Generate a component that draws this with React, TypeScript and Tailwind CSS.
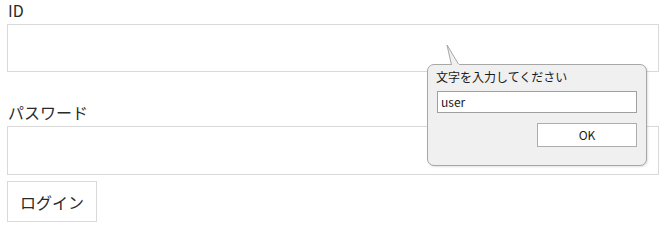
import React from 'react';

const jp = '"Noto Sans CJK JP", "Noto Sans", sans-serif';

// Speech-bubble prompt that hangs off the ID field
function PromptBubble() {
  return (
    <div className="absolute left-[427px] top-[64px] w-[220px] h-[102px]">
      {/* tail */}
      <svg
        className="absolute left-[18px] top-[-20px]"
        width="16"
        height="22"
        viewBox="0 0 16 22"
      >
        <path d="M6.5 21 L2 1 L14 21" fill="#f0f0f0" stroke="#a7a7a7" strokeWidth="1" />
      </svg>
      <div className="w-full h-full rounded-[7px] border border-[#a7a7a7] bg-[#f0f0f0] px-[9px] pt-[4px] shadow-[1px_1px_2px_rgba(0,0,0,0.12)]">
        <div className="relative z-10 -ml-px text-[12px] leading-[16px] text-[#1a1a1a]">文字を入力してください</div>
        <div className="mt-[6px] h-[22px] w-full border border-[#a0a0a0] bg-white pl-[3px] text-[12px] leading-[20px] text-[#1a1a1a]">
          user
        </div>
        <div className="mt-[10px] flex justify-end">
          <button className="h-[24px] w-[100px] border border-[#adadad] bg-white text-[12px] leading-[20px] text-[#1a1a1a]">
            OK
          </button>
        </div>
      </div>
      {/* hide bubble border beneath tail */}
      <div className="absolute left-[25px] top-0 w-[7px] h-[2px] bg-[#f0f0f0]" />
    </div>
  );
}

export default function App() {
  return (
    <div className="relative w-[672px] h-[231px] bg-white px-[7px] text-[#2a2a2a]" style={{ fontFamily: jp }}>
      <div className="h-[24px] pl-px text-[16px] leading-[20px]">ID</div>
      <div className="h-[48px] w-[652px] border border-[#d9d9d9] bg-white" />

      <div className="mt-[30px] h-[24px] pl-px text-[16px] leading-[20px]">パスワード</div>
      <div className="h-[49px] w-[652px] border border-[#d9d9d9] bg-white" />

      <button className="mt-[6px] h-[41px] w-[90px] border border-[#d9d9d9] bg-white text-[16px] leading-[20px] text-[#2a2a2a]">
        ログイン
      </button>

      <PromptBubble />
    </div>
  );
}
